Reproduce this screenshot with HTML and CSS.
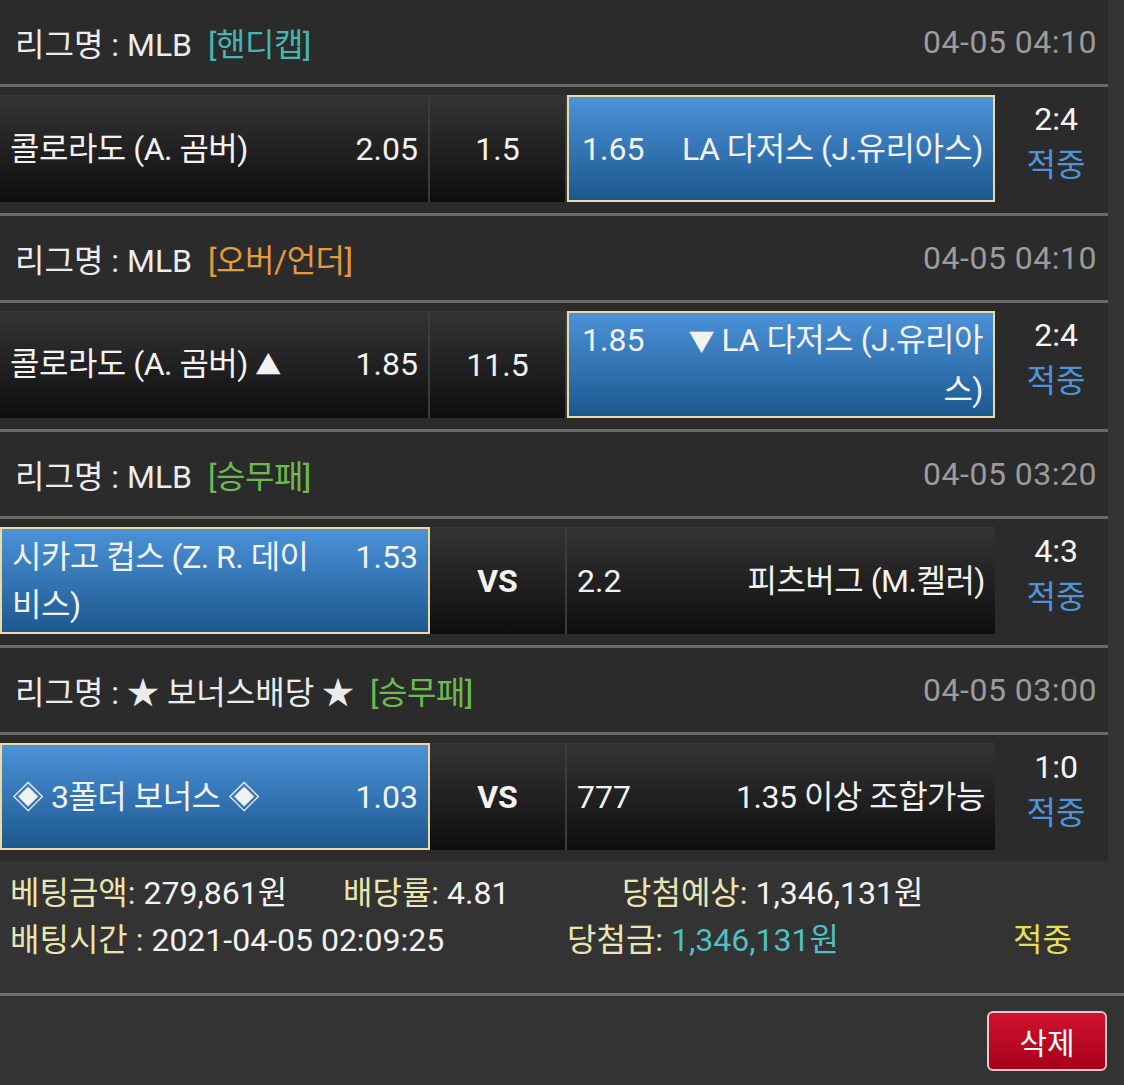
FILE: index.html
```html
<!DOCTYPE html>
<html lang="ko">
<head>
    <meta charset="UTF-8">
    <meta name="viewport" content="width=device-width, initial-scale=1.0">
    <title>배팅내역</title>
    <link rel="stylesheet" href="styles.css">
</head>
<body>
    <div class="slip">
        <div class="game">
            <div class="game-head">
                <div class="league">리그명 : MLB<span class="type handi">[핸디캡]</span></div>
                <div class="time">04-05 04:10</div>
            </div>
            <div class="game-row">
                <div class="cell home">
                    <div class="pick"><span class="team">콜로라도 (A. 곰버)</span><span class="odds">2.05</span></div>
                </div>
                <div class="cell mid">1.5</div>
                <div class="cell away selected">
                    <div class="pick"><span class="odds">1.65</span><span class="team">LA 다저스 (J.유리아스)</span></div>
                </div>
                <div class="result"><div class="score">2:4</div><div class="status">적중</div></div>
            </div>
        </div>

        <div class="game">
            <div class="game-head">
                <div class="league">리그명 : MLB<span class="type ou">[오버/언더]</span></div>
                <div class="time">04-05 04:10</div>
            </div>
            <div class="game-row">
                <div class="cell home">
                    <div class="pick"><span class="team">콜로라도 (A. 곰버) <span class="arrow">▲</span></span><span class="odds">1.85</span></div>
                </div>
                <div class="cell mid">11.5</div>
                <div class="cell away selected">
                    <div class="pick"><span class="odds">1.85</span><span class="team"><span class="arrow">▼</span> LA 다저스 (J.유리아스)</span></div>
                </div>
                <div class="result"><div class="score">2:4</div><div class="status">적중</div></div>
            </div>
        </div>

        <div class="game">
            <div class="game-head">
                <div class="league">리그명 : MLB<span class="type wdl">[승무패]</span></div>
                <div class="time">04-05 03:20</div>
            </div>
            <div class="game-row">
                <div class="cell home selected">
                    <div class="pick"><span class="team">시카고 컵스 (Z. R. 데이비스)</span><span class="odds">1.53</span></div>
                </div>
                <div class="cell mid vs">VS</div>
                <div class="cell away">
                    <div class="pick"><span class="odds">2.2</span><span class="team">피츠버그 (M.켈러)</span></div>
                </div>
                <div class="result"><div class="score">4:3</div><div class="status">적중</div></div>
            </div>
        </div>

        <div class="game">
            <div class="game-head">
                <div class="league">리그명 : ★ 보너스배당 ★<span class="type wdl">[승무패]</span></div>
                <div class="time">04-05 03:00</div>
            </div>
            <div class="game-row">
                <div class="cell home selected">
                    <div class="pick"><span class="team">◈ 3폴더 보너스 ◈</span><span class="odds">1.03</span></div>
                </div>
                <div class="cell mid vs">VS</div>
                <div class="cell away">
                    <div class="pick"><span class="odds">777</span><span class="team">1.35 이상 조합가능</span></div>
                </div>
                <div class="result"><div class="score">1:0</div><div class="status">적중</div></div>
            </div>
        </div>
    </div>

    <div class="summary">
        <div class="summary-line">
            <div class="item w1"><span class="label">베팅금액:</span> 279,861원</div>
            <div class="item w2"><span class="label">배당률:</span> 4.81</div>
            <div class="item"><span class="label">당첨예상:</span> 1,346,131원</div>
        </div>
        <div class="summary-line">
            <div class="item w3"><span class="label">배팅시간 :</span> 2021-04-05 02:09:25</div>
            <div class="item w4"><span class="label">당첨금:</span> <span class="won">1,346,131원</span></div>
            <div class="item hit">적중</div>
        </div>
    </div>

    <div class="actions">
        <button class="btn-del">삭제</button>
    </div>
</body>
</html>
```

FILE: styles.css
```css
body {
    margin: 0;
    background: #333;
    font-family: Roboto, "Noto Sans CJK KR", sans-serif;
    font-size: 32px;
    color: #f2f2f2;
}
.slip {
    width: 1108px;
    background: #2b2b2b;
}
.game-head {
    height: 84px;
    display: flex;
    align-items: center;
    justify-content: space-between;
    padding: 0 11px 0 15px;
    border-bottom: 3px solid #6a6a6a;
}
.league {
    color: #ececec;
}
.type {
    margin-left: 16px;
    letter-spacing: -0.5px;
}
.handi { color: #46b6b1; }
.ou { color: #e39b3c; }
.wdl { color: #6dbb4f; }
.time {
    color: #9c9c9c;
    letter-spacing: 0.5px;
}
.game-row {
    height: 129px;
    box-sizing: border-box;
    padding-top: 8px;
    display: flex;
    align-items: flex-start;
    border-bottom: 3px solid #6a6a6a;
}
.game:last-child .game-row {
    border-bottom: none;
    height: 126px;
}
.cell {
    height: 107px;
    box-sizing: border-box;
    padding: 0 10px;
    display: flex;
    align-items: center;
    background: linear-gradient(#343434, #0e0e0e);
}
.home {
    width: 430px;
    border-right: 2px solid #3c3c3c;
}
.mid {
    width: 137px;
    justify-content: center;
    border-right: 2px solid #3c3c3c;
}
.vs {
    font-weight: bold;
}
.away {
    width: 428px;
}
.selected {
    background: linear-gradient(#4b92d8, #1d5890);
    border: 2px solid #eadca0;
}
.away.selected {
    padding-left: 13px;
}
.pick {
    flex: 1;
    display: flex;
    justify-content: space-between;
    align-items: flex-start;
    line-height: 48px;
}
.team {
    letter-spacing: -0.5px;
}
.arrow {
    font-size: 26px;
}
.home .team {
    margin-right: 30px;
}
.away .team {
    margin-left: 30px;
    text-align: right;
}
.odds {
    flex: none;
}
.result {
    flex: 1;
    height: 107px;
    box-sizing: border-box;
    padding: 0 0 13px 9px;
    display: flex;
    flex-direction: column;
    justify-content: center;
    align-items: center;
    line-height: 46px;
}
.score {
    color: #f5f5f5;
}
.status {
    color: #4d94db;
}
.summary {
    padding: 9px 0 29px 10px;
    border-bottom: 3px solid #6d6d6d;
    line-height: 47px;
}
.summary-line {
    display: flex;
}
.label {
    color: #e9e5b0;
}
.w1 { width: 333px; }
.w2 { width: 279px; }
.w3 { width: 557px; }
.w4 { width: 446px; }
.won {
    color: #4fbfc0;
}
.hit {
    color: #e6de55;
}
.actions {
    display: flex;
    justify-content: flex-end;
    padding: 15px 17px 0 0;
}
.btn-del {
    width: 120px;
    height: 60px;
    background: linear-gradient(#d3122e, #a6001b);
    border: 2px solid #e8c6c9;
    border-radius: 6px;
    color: white;
    font-family: Roboto, "Noto Sans CJK KR", sans-serif;
    font-size: 30px;
    cursor: pointer;
}
```
